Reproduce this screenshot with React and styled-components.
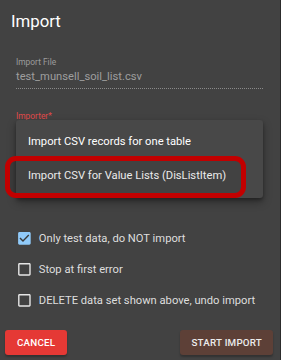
import styled, { createGlobalStyle } from 'styled-components';

const GlobalStyle = createGlobalStyle`
    html, body {
        margin: 0;
        padding: 0;
        background-color: #424242;
    }
    * {
        box-sizing: border-box;
    }
`;

const Dialog = styled.div`
    width: 281px;
    height: 360px;
    display: flex;
    flex-direction: column;
    background-color: #424242;
    border-right: 1px solid #2c2c2c;
    font-family: Roboto, 'Liberation Sans', sans-serif;
    color: #fff;
    overflow: hidden;
`;

const Title = styled.h2`
    margin: 0;
    padding: 11px 11px 0;
    font-size: 16.8px;
    line-height: 20px;
    font-weight: 400;
    color: #fff;
`;

const Content = styled.div`
    display: flex;
    flex-direction: column;
    padding: 0 17px 0 16px;
`;

const Field = styled.div`
    display: flex;
    flex-direction: column;
    margin-top: ${(p) => p.$top}px;
`;

const Label = styled.label`
    font-size: 8.4px;
    line-height: 10px;
    color: ${(p) => (p.$error ? '#e04a4a' : '#9c9c9c')};
`;

const Value = styled.div`
    margin-top: 3px;
    padding-bottom: 4px;
    font-size: 11.2px;
    line-height: 14px;
    color: #9e9e9e;
    border-bottom: 1px dotted #8a8a8a;
`;

const Menu = styled.ul`
    position: relative;
    list-style: none;
    margin: -1px 0 0;
    padding: 5.6px 0;
    background-color: #484848;
    border-radius: 3px;
    box-shadow: 0 4px 8px rgba(0, 0, 0, 0.35), 0 2px 3px rgba(0, 0, 0, 0.25);
`;

const MenuItem = styled.li`
    height: 33.6px;
    display: flex;
    align-items: center;
    padding: 0 12px;
    font-size: 11.2px;
    color: #fff;
    white-space: nowrap;
`;

// red marker drawn over the screenshot
const Highlight = styled.span`
    position: absolute;
    left: -11px;
    top: 36px;
    width: 241px;
    height: 42px;
    border: 5px solid #c20000;
    border-radius: 11px;
    background-color: rgba(0, 0, 0, 0.08);
    pointer-events: none;
`;

const Options = styled.div`
    display: flex;
    flex-direction: column;
    margin-top: 25px;
`;

const CheckRow = styled.label`
    height: 31px;
    display: flex;
    align-items: center;
    gap: 6px;
    font-size: 11.2px;
    color: #dedede;
    white-space: nowrap;
`;

const Box = styled.svg`
    width: 16.8px;
    height: 16.8px;
    flex-shrink: 0;
`;

const Actions = styled.div`
    margin-top: auto;
    display: flex;
    justify-content: space-between;
    padding: 0 7px 5px 5px;
`;

const Button = styled.button`
    all: unset;
    height: 25px;
    padding: 0 ${(p) => (p.$primary ? 11 : 12)}px;
    display: flex;
    align-items: center;
    border-radius: 3px;
    font-family: Roboto, 'Liberation Sans', sans-serif;
    font-size: 9.8px;
    font-weight: 500;
    letter-spacing: 0.2px;
    text-transform: uppercase;
    color: ${(p) => (p.$primary ? '#ececec' : '#fff')};
    background-color: ${(p) => (p.$primary ? '#5d4037' : '#e53935')};
    box-shadow: 0 2px 2px rgba(0, 0, 0, 0.25);
`;

function CheckIcon({ checked }) {
    if (checked) {
        return (
            <Box viewBox="0 0 24 24">
                <rect x="4" y="4" width="16" height="16" fill="#3a3a3a" />
                <path
                    fill="#90caf9"
                    d="M19 3H5c-1.11 0-2 .9-2 2v14c0 1.1.89 2 2 2h14c1.11 0 2-.9 2-2V5c0-1.1-.89-2-2-2zm-9 14l-5-5 1.41-1.41L10 14.17l7.59-7.59L19 8l-9 9z"
                />
            </Box>
        );
    }
    return (
        <Box viewBox="0 0 24 24">
            <path
                fill="#e6e6e6"
                d="M19 5v14H5V5h14m0-2H5c-1.1 0-2 .9-2 2v14c0 1.1.9 2 2 2h14c1.1 0 2-.9 2-2V5c0-1.1-.9-2-2-2z"
            />
        </Box>
    );
}

const options = [
    { label: 'Only test data, do NOT import', checked: true },
    { label: 'Stop at first error', checked: false },
    { label: 'DELETE data set shown above, undo import', checked: false },
];

function App() {
    return (
        <>
            <GlobalStyle />
            <Dialog>
                <Title>Import</Title>
                <Content>
                    <Field $top={26}>
                        <Label>Import File</Label>
                        <Value>test_munsell_soil_list.csv</Value>
                    </Field>
                    <Field $top={21.5}>
                        <Label $error>Importer*</Label>
                    </Field>
                    <Menu>
                        <MenuItem>Import CSV records for one table</MenuItem>
                        <MenuItem>Import CSV for Value Lists (DisListItem)</MenuItem>
                        <Highlight />
                    </Menu>
                    <Options>
                        {options.map((o) => (
                            <CheckRow key={o.label}>
                                <CheckIcon checked={o.checked} />
                                {o.label}
                            </CheckRow>
                        ))}
                    </Options>
                </Content>
                <Actions>
                    <Button>Cancel</Button>
                    <Button $primary>Start Import</Button>
                </Actions>
            </Dialog>
        </>
    );
}

export default App;
